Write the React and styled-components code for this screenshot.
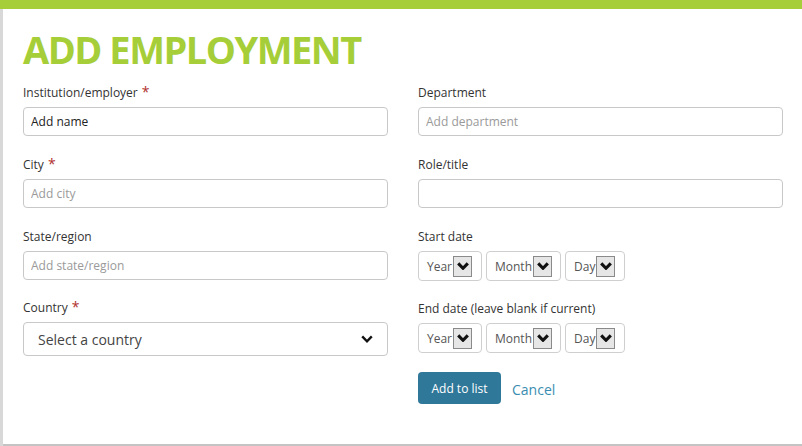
import React from 'react';
import styled, { createGlobalStyle } from 'styled-components';

const GlobalStyle = createGlobalStyle`
  body {
    margin: 0;
    background: #d8d8d8;
    font-family: "Open Sans", "Liberation Sans", sans-serif;
  }
`;

const Page = styled.div`
  width: 802px;
  height: 446px;
  display: flex;
  flex-direction: column;
  overflow: hidden;
`;

const TopBar = styled.div`
  height: 9px;
  background: #a6ce39;
  flex-shrink: 0;
`;

const Modal = styled.div`
  flex: 1;
  margin-left: 3px;
  background: #fff;
  border-bottom: 2px solid #c4c4c4;
  padding: 0 19px 0 20px;
`;

const Title = styled.h1`
  margin: 17px 0 12px;
  font-size: 38px;
  line-height: 46px;
  font-weight: 700;
  color: #a6ce39;
  letter-spacing: -1.5px;
`;

const Columns = styled.div`
  display: grid;
  grid-template-columns: 365px 365px;
  column-gap: 30px;
`;

const Column = styled.div`
  display: flex;
  flex-direction: column;
`;

const Field = styled.div`
  display: flex;
  flex-direction: column;
  margin-bottom: ${(p) => (p.last ? '0' : p.tight ? '19px' : '20px')};
`;

const Label = styled.label`
  font-size: 12px;
  line-height: 17px;
  height: 17px;
  color: #333;
  margin-bottom: 6px;
`;

const Required = styled.span`
  color: #b0302c;
  font-size: 14px;
  line-height: 1;
  margin-left: 4px;
`;

const TextInput = styled.input`
  box-sizing: border-box;
  height: 29px;
  width: 100%;
  border: 1px solid #c8c8c8;
  border-radius: 4px;
  padding: 0 7px;
  font-family: "Open Sans", "Liberation Sans", sans-serif;
  font-size: 12px;
  color: #222;
  outline: none;
  &::placeholder {
    color: #9a9a9a;
  }
`;

const CountrySelect = styled.div`
  box-sizing: border-box;
  height: 34px;
  border: 1px solid #c8c8c8;
  border-radius: 4px;
  padding: 0 14px;
  display: flex;
  align-items: center;
  justify-content: space-between;
  font-size: 14px;
  color: #444;
`;

const DateRow = styled.div`
  display: flex;
  gap: 4px;
`;

const DateBox = styled.div`
  box-sizing: border-box;
  height: 30px;
  width: ${(p) => p.w}px;
  border: 1px solid #cfcfcf;
  border-radius: 4px;
  display: flex;
  align-items: center;
  padding-left: 8px;
  font-size: 12px;
  color: #555;
`;

const ArrowBox = styled.span`
  box-sizing: border-box;
  width: 19px;
  height: 21px;
  margin-left: 1px;
  border: 1px solid #8a8a8a;
  background: #e6e6e6;
  display: flex;
  align-items: center;
  justify-content: center;
`;

const Actions = styled.div`
  display: flex;
  align-items: center;
  gap: 11px;
  margin-top: 19px;
`;

const PrimaryButton = styled.button`
  height: 32px;
  width: 83px;
  border: none;
  border-radius: 4px;
  background: #2f7899;
  color: #fff;
  font-family: "Open Sans", "Liberation Sans", sans-serif;
  font-size: 12px;
  padding: 0;
`;

const CancelLink = styled.a`
  color: #3a8db0;
  font-size: 14px;
  text-decoration: none;
  margin-top: 2px;
`;

const Chevron = ({ size = 10, stroke = 2.4 }) => (
  <svg width={size} height={size * 0.7} viewBox="0 0 10 7">
    <path d="M1 1.2 L5 5.2 L9 1.2" fill="none" stroke="#111" strokeWidth={stroke} />
  </svg>
);

const DateSelect = ({ text, w }) => (
  <DateBox w={w}>
    {text}
    <ArrowBox>
      <Chevron size={12} stroke={2.6} />
    </ArrowBox>
  </DateBox>
);

const DatePicker = () => (
  <DateRow>
    <DateSelect text="Year" w={64} />
    <DateSelect text="Month" w={75} />
    <DateSelect text="Day" w={60} />
  </DateRow>
);

const App = () => (
  <Page>
    <GlobalStyle />
    <TopBar />
    <Modal>
      <Title>ADD EMPLOYMENT</Title>
      <Columns>
        <Column>
          <Field>
            <Label>
              Institution/employer<Required>*</Required>
            </Label>
            <TextInput defaultValue="Add name" />
          </Field>
          <Field>
            <Label>
              City<Required>*</Required>
            </Label>
            <TextInput placeholder="Add city" />
          </Field>
          <Field tight>
            <Label>State/region</Label>
            <TextInput placeholder="Add state/region" />
          </Field>
          <Field last>
            <Label>
              Country<Required>*</Required>
            </Label>
            <CountrySelect>
              Select a country
              <Chevron size={12} stroke={2} />
            </CountrySelect>
          </Field>
        </Column>
        <Column>
          <Field>
            <Label>Department</Label>
            <TextInput placeholder="Add department" />
          </Field>
          <Field>
            <Label>Role/title</Label>
            <TextInput />
          </Field>
          <Field tight>
            <Label>Start date</Label>
            <DatePicker />
          </Field>
          <Field last>
            <Label>End date (leave blank if current)</Label>
            <DatePicker />
          </Field>
          <Actions>
            <PrimaryButton>Add to list</PrimaryButton>
            <CancelLink href="#">Cancel</CancelLink>
          </Actions>
        </Column>
      </Columns>
    </Modal>
  </Page>
);

export default App;
